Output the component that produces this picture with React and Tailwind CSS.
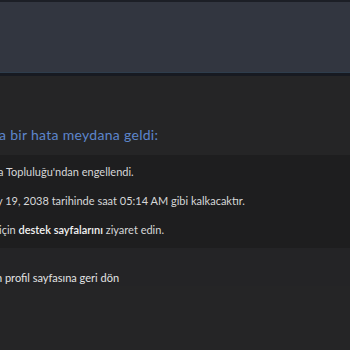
import React from "react";

const font = { fontFamily: 'Lato, "Liberation Sans", sans-serif' };

const ErrorPage = () => {
  return (
    <div className="w-[350px] h-[350px] overflow-hidden bg-[#252526]" style={font}>
      {/* global header */}
      <div className="h-[76px] bg-[#323640] border-t-2 border-t-[#1c1f26] border-b-[3px] border-b-[#171a21] shadow-[inset_0_-1px_0_#2e3d4c]" />

      <div className="pt-[49px]">
        <h2 className="ml-[-1px] text-[14px] leading-5 text-[#5d86cc] font-normal tracking-[0.3px]">
          a bir hata meydana geldi:
        </h2>

        <div className="mt-[10px] bg-[#1e1e1f] pt-[8px] pb-[10px] text-[11px] text-[#d6d7d8] flex flex-col gap-[12px]">
          <p className="ml-[-2px] leading-[17px]">a Topluluğu'ndan engellendi.</p>
          <p className="ml-[-3px] leading-[17px]">y 19, 2038 tarihinde saat 05:14 AM gibi kalkacaktır.</p>
          <p className="ml-[-1px] leading-[17px]">
            için <span className="text-[#f2f2f2] font-semibold">destek sayfalarını</span> ziyaret edin.
          </p>
        </div>

        <div className="bg-[#242426] pt-[21px] text-[11px] text-[#e2e3e4]">
          <p className="ml-[-4px] leading-[17px]">n profil sayfasına geri dön</p>
        </div>
      </div>
    </div>
  );
};

export default function App() {
  return <ErrorPage />;
}
